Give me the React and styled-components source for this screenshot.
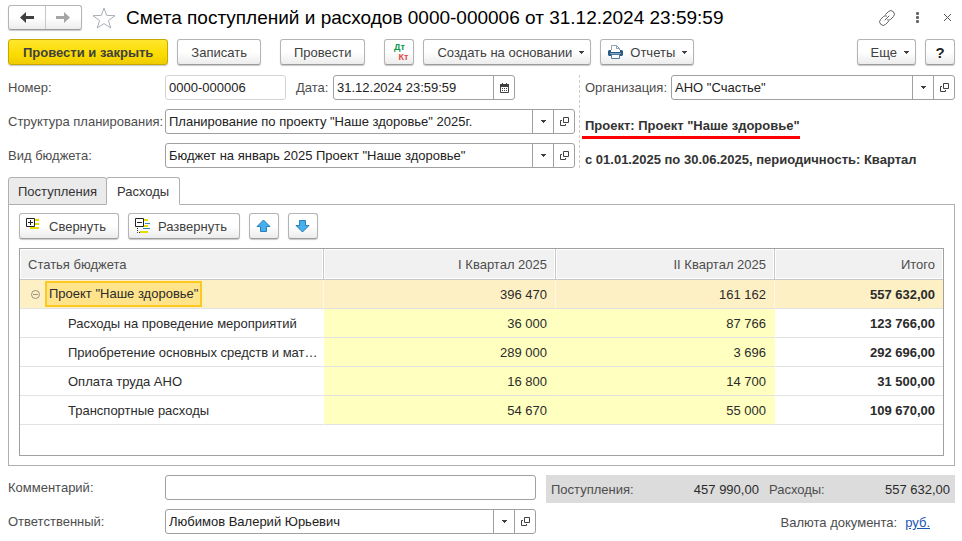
import React, { useState } from 'react';
import styled, { createGlobalStyle, css } from 'styled-components';

const ROWS = [
  { name: 'Расходы на проведение мероприятий', q1: '36 000', q2: '87 766', total: '123 766,00' },
  { name: 'Приобретение основных средств и мат…', q1: '289 000', q2: '3 696', total: '292 696,00' },
  { name: 'Оплата труда АНО', q1: '16 800', q2: '14 700', total: '31 500,00' },
  { name: 'Транспортные расходы', q1: '54 670', q2: '55 000', total: '109 670,00' },
];

function Caret() {
  return (
    <svg width="5" height="3" viewBox="0 0 5 3" aria-hidden="true">
      <path d="M0 0H5V1H4V2H3V3H2V2H1V1H0Z" fill="#404040" />
    </svg>
  );
}

function Arrow({ color, flip }) {
  return (
    <svg width="14" height="11" viewBox="0 0 14 11" aria-hidden="true">
      <path
        d="M0 5.5L6 0V4H14V7H6V11Z"
        fill={color}
        transform={flip ? 'rotate(180 7 5.5)' : undefined}
      />
    </svg>
  );
}

function BlueArrow({ down }) {
  return (
    <svg width="15" height="14" viewBox="0 0 15 14" aria-hidden="true">
      <path
        d="M7.5 1L14 7.5H10.5V12.5H4.5V7.5H1Z"
        fill="#45b0ee"
        stroke="#2b7fb5"
        strokeLinejoin="round"
        transform={down ? 'rotate(180 7.5 7)' : undefined}
      />
    </svg>
  );
}

function OpenIcon() {
  return (
    <svg width="9" height="9" viewBox="0 0 9 9" fill="none" stroke="#404040" aria-hidden="true">
      <path d="M3.5 0.5H8.5V5.5H3.5Z" />
      <path d="M2 3.5H0.5V8.5H5.5V7" />
    </svg>
  );
}

function CalendarIcon() {
  return (
    <svg width="9" height="10" viewBox="0 0 9 10" aria-hidden="true">
      <path d="M0.5 2.5H8.5V9.5H0.5Z" fill="#fff" stroke="#404040" />
      <path d="M0 1H9V4H0Z" fill="#404040" />
      <path d="M2 0H3V2H2ZM6 0H7V2H6Z" fill="#404040" />
      <path d="M2 5H3V6H2ZM4 5H5V6H4ZM6 5H7V6H6ZM2 7H3V8H2ZM4 7H5V8H4ZM6 7H7V8H6Z" fill="#404040" />
    </svg>
  );
}

function PrinterIcon() {
  return (
    <svg width="15" height="14" viewBox="0 0 15 14" aria-hidden="true">
      <path d="M3.5 5V0.5H8.5L11.5 3.5V5" fill="#fff" stroke="#8ba2b5" />
      <path d="M8.5 0.5V3.5H11.5" fill="none" stroke="#8ba2b5" />
      <path d="M1 5H3V7H12V5H14L15 6V10L14 11H1L0 10V6Z" fill="#2b5b85" />
      <path d="M2 8.5H13" stroke="#7fa3c2" />
      <path d="M3.5 9.5H11.5V13.5H3.5Z" fill="#fff" stroke="#4b7ba3" />
    </svg>
  );
}

function CollapseIcon() {
  return (
    <svg width="15" height="16" viewBox="0 0 15 16" aria-hidden="true">
      <path d="M8 1H13V3H8ZM4 5H13V7H4ZM4 9H13V11H4Z" fill="#e6dc00" />
      <path d="M0.5 0.5H8.5V8.5H0.5Z" fill="#fff" stroke="#222" />
      <path d="M2 4.5H7M4.5 2V7" stroke="#222" />
    </svg>
  );
}

function ExpandIcon() {
  return (
    <svg width="15" height="16" viewBox="0 0 15 16" aria-hidden="true">
      <path d="M8 1H13V3H8ZM5 7H13V9H5ZM5 13H13V15H5Z" fill="#e6dc00" />
      <path d="M10 5.5H15M8 10.5H15" stroke="#2f86b8" />
      <path d="M0.5 0.5H8.5V8.5H0.5Z" fill="#fff" stroke="#222" />
      <path d="M2 4.5H7" stroke="#222" />
      <path d="M2.5 10V14.5H5" fill="none" stroke="#222" strokeDasharray="1 1" />
    </svg>
  );
}

function StarIcon() {
  return (
    <svg width="24" height="22" viewBox="0 0 24 22" aria-hidden="true">
      <path
        d="M12 1L14.7 8.4L23 8.7L16.4 13.6L18.8 21L12 16.6L5.2 21L7.6 13.6L1 8.7L9.3 8.4Z"
        fill="#fff"
        stroke="#a8adb3"
      />
    </svg>
  );
}

function LinkIcon() {
  return (
    <svg width="16" height="16" viewBox="0 0 16 16" fill="none" stroke="#606060" strokeLinecap="round" aria-hidden="true">
      <path d="M6.5 4.5L9.3 1.7A2.9 2.9 0 0 1 14.3 6.7L11.5 9.5A2.9 2.9 0 0 1 8.5 10" />
      <path d="M9.5 11.5L6.7 14.3A2.9 2.9 0 0 1 1.7 9.3L4.5 6.5A2.9 2.9 0 0 1 7.5 6" />
      <path d="M6 10L10 6" />
    </svg>
  );
}

function Combo({ id, value }) {
  return (
    <Field $grow>
      <SelectBox>
        <select id={id} defaultValue={value}>
          <option>{value}</option>
        </select>
        <span><Caret /></span>
      </SelectBox>
      <FieldButton type="button" aria-label="Открыть"><OpenIcon /></FieldButton>
    </Field>
  );
}

function App() {
  const [tab, setTab] = useState('expenses');

  return (
    <Page>
      <GlobalStyle />
      <TitleBar>
        <NavGroup>
          <button type="button" aria-label="Назад"><Arrow color="#404040" /></button>
          <button type="button" aria-label="Вперед"><Arrow color="#a6a6a6" flip /></button>
        </NavGroup>
        <PlainButton type="button" aria-label="Избранное"><StarIcon /></PlainButton>
        <h1>Смета поступлений и расходов 0000-000006 от 31.12.2024 23:59:59</h1>
        <WindowTools>
          <PlainButton type="button" aria-label="Ссылка"><LinkIcon /></PlainButton>
          <PlainButton type="button" aria-label="Меню">
            <svg width="7" height="11" viewBox="0 0 7 11" fill="#666">
              <rect width="3" height="3" rx="1" />
              <rect y="4" width="3" height="3" rx="1" />
              <rect y="8" width="3" height="3" rx="1" />
            </svg>
          </PlainButton>
          <PlainButton type="button" aria-label="Закрыть">
            <svg width="7" height="7" viewBox="0 0 7 7" stroke="#555">
              <path d="M0 0L7 7M7 0L0 7" />
            </svg>
          </PlainButton>
        </WindowTools>
      </TitleBar>

      <CommandBar>
        <Button type="button" $primary>Провести и закрыть</Button>
        <Button type="button">Записать</Button>
        <Divider />
        <Button type="button">Провести</Button>
        <Divider />
        <Button type="button" $square>
          <DtKt><b>Дт</b><b>Кт</b></DtKt>
        </Button>
        <Button type="button" $menu>Создать на основании <Caret /></Button>
        <Button type="button" $menu $icon><PrinterIcon />Отчеты <Caret /></Button>
        <Spacer />
        <Button type="button" $menu>Еще <Caret /></Button>
        <Button type="button" $square $strong>?</Button>
      </CommandBar>

      <Header>
        <HeaderMain>
          <FormRow>
            <Label htmlFor="number">Номер:</Label>
            <Field $width="121px" $muted>
              <input id="number" defaultValue="0000-000006" />
            </Field>
            <InlineLabel htmlFor="date">Дата:</InlineLabel>
            <Field $width="182px">
              <input id="date" defaultValue="31.12.2024 23:59:59" />
              <FieldButton type="button" aria-label="Календарь"><CalendarIcon /></FieldButton>
            </Field>
          </FormRow>
          <FormRow>
            <Label htmlFor="plan">Структура планирования:</Label>
            <Combo id="plan" value={'Планирование по проекту "Наше здоровье" 2025г.'} />
          </FormRow>
          <FormRow>
            <Label htmlFor="kind">Вид бюджета:</Label>
            <Combo id="kind" value={'Бюджет на январь 2025 Проект "Наше здоровье"'} />
          </FormRow>
        </HeaderMain>
        <HeaderSide>
          <FormRow>
            <Label htmlFor="org" $narrow>Организация:</Label>
            <Combo id="org" value={'АНО "Счастье"'} />
          </FormRow>
          <Info><Marked>Проект: Проект "Наше здоровье"</Marked></Info>
          <Info>с 01.01.2025 по 30.06.2025, периодичность: Квартал</Info>
        </HeaderSide>
      </Header>

      <Tabs role="tablist">
        <Tab type="button" role="tab" aria-selected={tab === 'income'} $active={tab === 'income'} onClick={() => setTab('income')}>
          Поступления
        </Tab>
        <Tab type="button" role="tab" aria-selected={tab === 'expenses'} $active={tab === 'expenses'} onClick={() => setTab('expenses')}>
          Расходы
        </Tab>
      </Tabs>
      <Panel>
        <PanelBar>
          <Button type="button" $tool><CollapseIcon />Свернуть</Button>
          <Button type="button" $tool><ExpandIcon />Развернуть</Button>
          <Button type="button" $square aria-label="Вверх"><BlueArrow /></Button>
          <Button type="button" $square aria-label="Вниз"><BlueArrow down /></Button>
        </PanelBar>
        <TableBox>
          <Table>
            <thead>
              <tr>
                <Th>Статья бюджета</Th>
                <Th $width="232px">I Квартал 2025</Th>
                <Th $width="219px">II Квартал 2025</Th>
                <Th $width="168px">Итого</Th>
              </tr>
            </thead>
            <tbody>
              <GroupRow>
                <td>
                  <GroupCell>
                    <svg width="9" height="9" viewBox="0 0 9 9" fill="none" stroke="#9a917a">
                      <circle cx="4.5" cy="4.5" r="4" />
                      <path d="M2 4.5H7" />
                    </svg>
                    <span>Проект "Наше здоровье"</span>
                  </GroupCell>
                </td>
                <td>396 470</td>
                <td>161 162</td>
                <td>557 632,00</td>
              </GroupRow>
              {ROWS.map((row) => (
                <ItemRow key={row.name}>
                  <td>{row.name}</td>
                  <td>{row.q1}</td>
                  <td>{row.q2}</td>
                  <td>{row.total}</td>
                </ItemRow>
              ))}
            </tbody>
          </Table>
        </TableBox>
      </Panel>

      <Footer>
        <FooterMain>
          <FormRow>
            <Label htmlFor="comment">Комментарий:</Label>
            <Field $grow><input id="comment" /></Field>
          </FormRow>
          <FormRow>
            <Label htmlFor="owner">Ответственный:</Label>
            <Combo id="owner" value="Любимов Валерий Юрьевич" />
          </FormRow>
        </FooterMain>
        <FooterSide>
          <Totals>
            <span>Поступления:</span>
            <output>457 990,00</output>
            <span>Расходы:</span>
            <output>557 632,00</output>
          </Totals>
          <Currency>
            Валюта документа: <a href="#currency">руб.</a>
          </Currency>
        </FooterSide>
      </Footer>
    </Page>
  );
}

export default App;

const GlobalStyle = createGlobalStyle`
  *{
    box-sizing: border-box;
  }
  body{
    margin: 0;
    background: #fff;
  }
  body, button, input, select{
    font-family: "Liberation Sans", Arial, sans-serif;
    font-size: 13px;
    color: #333;
  }
  svg{
    display: block;
    flex: none;
  }
`

const Page = styled.div`
  padding: 5px 7px 6px 8px;
`

const TitleBar = styled.div`
  display: flex;
  align-items: center;
  height: 25px;

  h1{
    margin: 0 0 0 10px;
    font-size: 19px;
    font-weight: normal;
    color: #000;
    white-space: nowrap;
  }
`

const bevel = css`
  border: 1px solid #b4b4b4;
  border-bottom-color: #9c9c9c;
  border-radius: 3px;
  background: linear-gradient(#fff 50%, #ececec);
  box-shadow: 0 1px 1px #c8c8c8;
`

const NavGroup = styled.div`
  ${bevel}
  display: flex;
  width: 74px;
  height: 25px;
  margin-right: 10px;

  button{
    flex: 1;
    display: flex;
    align-items: center;
    justify-content: center;
    padding: 0;
    border: none;
    background: none;
  }
  button + button{
    border-left: 1px solid #c8c8c8;
  }
`

const PlainButton = styled.button`
  display: flex;
  padding: 0;
  border: none;
  background: none;
`

const WindowTools = styled.div`
  display: flex;
  align-items: center;
  gap: 21px;
  margin-left: auto;
  padding-right: 4px;
`

const CommandBar = styled.div`
  display: flex;
  gap: 9px;
  margin-top: 9px;
`

const Button = styled.button`
  ${bevel}
  display: flex;
  align-items: center;
  justify-content: center;
  height: 26px;
  padding: 0 13px;
  color: #404040;
  white-space: nowrap;

  ${(p) => p.$primary && css`
    padding: 0 14px;
    border-color: #c4a900;
    background: linear-gradient(#ffe62e, #fbdc00 60%, #efcb00);
    font-weight: bold;
  `}
  ${(p) => p.$square && css`
    width: 30px;
    padding: 0;
  `}
  ${(p) => p.$strong && css`
    font-size: 15px;
    font-weight: bold;
    color: #222;
  `}
  ${(p) => p.$menu && css`
    gap: 7px;
    padding: 0 6px 0 13px;
  `}
  ${(p) => p.$icon && css`
    padding-left: 7px;
  `}
  ${(p) => p.$tool && css`
    gap: 8px;
    padding: 0 12px 0 6px;
  `}
`

const Divider = styled.span`
  width: 1px;
`

const Spacer = styled.span`
  flex: 1;
`

const DtKt = styled.span`
  display: grid;
  width: 18px;
  font-size: 9px;
  line-height: 10px;

  b{
    color: #0a9a4a;
  }
  b + b{
    justify-self: end;
    color: #e04848;
  }
`

const Header = styled.div`
  display: flex;
  gap: 4px;
  margin-top: 10px;
`

const HeaderMain = styled.div`
  flex: 1;
  display: grid;
  gap: 9px;
`

const HeaderSide = styled.div`
  width: 376px;
  display: grid;
  gap: 9px;
  padding-left: 5px;
  border-left: 1px dashed #ccc;
`

const FormRow = styled.div`
  display: flex;
  align-items: center;
`

const Label = styled.label`
  flex: none;
  width: ${(p) => (p.$narrow ? '86px' : '157px')};
  color: #4d4d4d;
  white-space: nowrap;
`

const InlineLabel = styled.label`
  width: 47px;
  padding-left: 10px;
  color: #4d4d4d;
`

const Field = styled.div`
  display: flex;
  flex: ${(p) => (p.$grow ? '1' : 'none')};
  width: ${(p) => p.$width || 'auto'};
  min-width: 0;
  height: 25px;
  border: 1px solid ${(p) => (p.$muted ? '#d4d4d4' : '#a0a0a0')};
  border-radius: 3px;
  background: #fff;

  input, select{
    flex: 1;
    min-width: 0;
    padding: 0 3px;
    border: none;
    background: none;
    outline: none;
    color: #222;
  }
`

const SelectBox = styled.div`
  flex: 1;
  display: grid;
  grid-template-columns: 1fr 21px;
  min-width: 0;

  select{
    grid-area: 1 / 1 / 2 / 3;
    appearance: none;
  }
  span{
    grid-area: 1 / 2;
    display: flex;
    align-items: center;
    justify-content: center;
    border-left: 1px solid #a0a0a0;
    pointer-events: none;
  }
`

const FieldButton = styled.button`
  display: flex;
  align-items: center;
  justify-content: center;
  width: 21px;
  padding: 0;
  border: none;
  border-left: 1px solid #a0a0a0;
  background: none;
`

const Info = styled.div`
  height: 25px;
  line-height: 34px;
  font-weight: bold;
  white-space: nowrap;
`

// red marker line lies over the row, a little wider than the text on the left
const Marked = styled.span`
  display: inline-block;
  position: relative;

  &::after{
    content: "";
    position: absolute;
    left: -3px;
    right: 0;
    bottom: 4px;
    height: 3px;
    background: #f00;
  }
`

const Tabs = styled.div`
  display: flex;
  margin-top: 9px;
`

const Tab = styled.button`
  height: 28px;
  margin-bottom: -1px;
  padding: 0 9px;
  border: 1px solid #b0b0b0;
  border-bottom-color: ${(p) => (p.$active ? '#fff' : '#b0b0b0')};
  border-radius: 3px 3px 0 0;
  background: ${(p) => (p.$active ? '#fff' : '#ebebeb')};
  z-index: ${(p) => (p.$active ? 1 : 0)};

  & + &{
    margin-left: -1px;
    padding: 0 10px;
  }
`

const Panel = styled.div`
  padding: 8px 10px 9px;
  border: 1px solid #b0b0b0;
`

const PanelBar = styled.div`
  display: flex;
  gap: 9px;
`

const TableBox = styled.div`
  min-height: 208px;
  margin-top: 9px;
  border: 1px solid #a0a0a0;
`

const Table = styled.table`
  width: 100%;
  table-layout: fixed;
  border-collapse: separate;
  border-spacing: 0;

  th, td{
    height: 29px;
    padding: 0 8px;
    overflow: hidden;
    text-align: right;
    text-overflow: ellipsis;
    white-space: nowrap;
  }
  th:first-child, td:first-child{
    text-align: left;
  }
  td{
    border-right: 1px solid transparent;
    border-bottom: 1px solid #e2e2e2;
    color: #2b2b2b;
  }
  th:last-child, td:last-child{
    border-right: none;
  }
  td:last-child{
    font-weight: bold;
  }
  thead th{
    height: 31px;
  }
`

const Th = styled.th`
  width: ${(p) => p.$width || 'auto'};
  border-right: 1px solid #c8c8c8;
  border-bottom: 1px solid #c8c8c8;
  background: #f1f1f1;
  box-shadow: inset 0 0 0 1px #fff;
  font-weight: normal;
  color: #4d4d4d;
`

const GroupRow = styled.tr`
  td{
    border-right-color: #fff8e4;
    background: #fdf0c4;
  }
  td:first-child{
    padding: 0 0 0 11px;
  }
`

const GroupCell = styled.div`
  display: flex;
  align-items: center;
  gap: 5px;

  span{
    padding: 0 2px;
    border: 2px solid #fcc824;
    background: #ffe48c;
    line-height: 22px;
  }
`

const ItemRow = styled.tr`
  td:first-child{
    padding: 0 2px 0 48px;
  }
  td:nth-child(2), td:nth-child(3){
    background: #ffffc0;
  }
`

const Footer = styled.div`
  display: flex;
  gap: 10px;
  margin-top: 9px;
`

const FooterMain = styled.div`
  flex: 1;
  display: grid;
  gap: 9px;
`

const FooterSide = styled.div`
  width: 409px;
`

const Totals = styled.div`
  display: grid;
  grid-template-columns: auto 1fr auto 1fr;
  column-gap: 10px;
  align-items: center;
  height: 28px;
  padding: 0 5px;
  background: #dcdcdc;
  color: #4d4d4d;

  output{
    text-align: right;
    color: #2b2b2b;
  }
`

const Currency = styled.div`
  display: flex;
  justify-content: flex-end;
  gap: 8px;
  margin-top: 12px;
  padding-right: 25px;
  color: #4d4d4d;

  a{
    color: #1a56b8;
  }
`
